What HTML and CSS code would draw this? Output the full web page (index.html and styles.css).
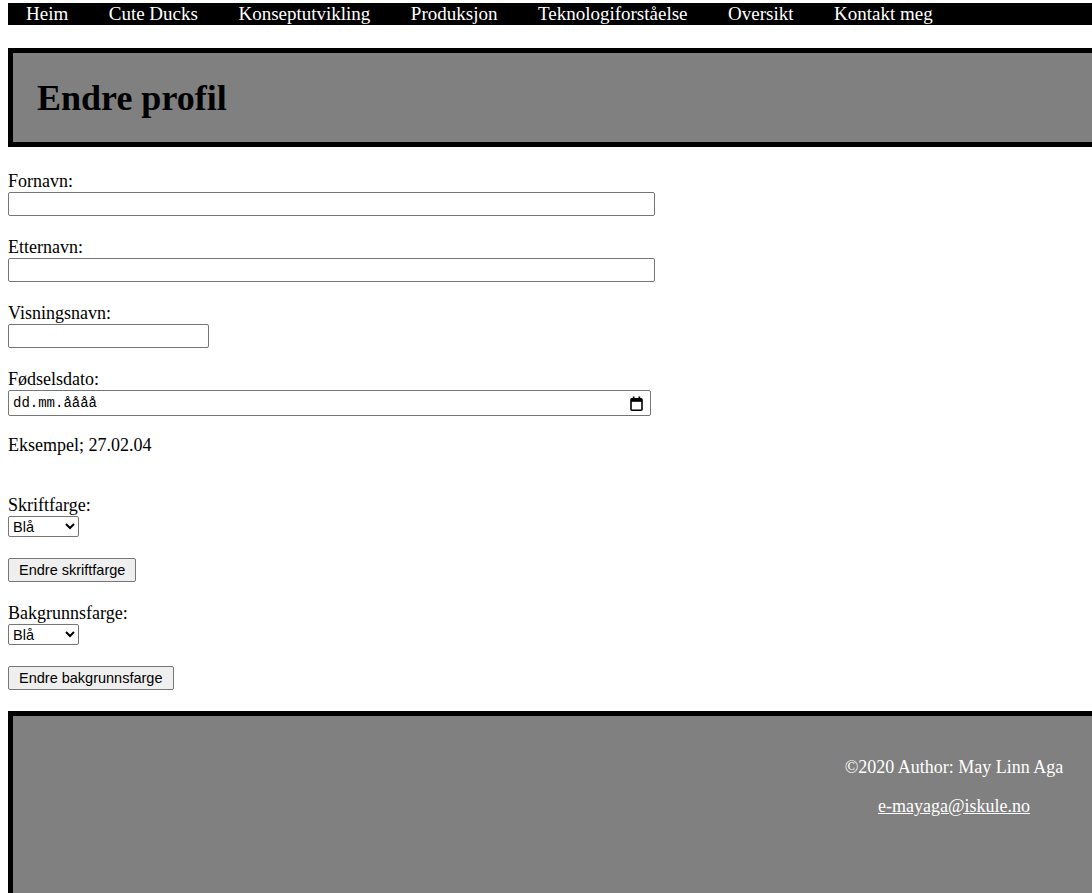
FILE: index.html
```html
<!DOCTYPE html>
<html lang="no">
<head>
    <meta charset="UTF-8">
    <meta name="viewport" content="width=device-width, initial-scale=1.0">
    <title>Endre profil</title>
    <link rel="stylesheet" href="styles.css">
</head>
<body>

    <nav class="topnav">
        <ul>
            <li><a href="#">Heim</a></li>
            <li><a href="#">Cute Ducks</a></li>
            <li><a href="#">Konseptutvikling</a></li>
            <li><a href="#">Produksjon</a></li>
            <li><a href="#">Teknologiforståelse</a></li>
            <li><a href="#">Oversikt</a></li>
            <li><a href="#">Kontakt meg</a></li>
        </ul>
    </nav>

    <header class="banner">
        <h1>Endre profil</h1>
    </header>

    <main class="profile">
        <form id="profileForm">
            <div class="field">
                <label for="fornavn">Fornavn:</label>
                <input type="text" id="fornavn" name="fornavn" class="wide">
            </div>

            <div class="field">
                <label for="etternavn">Etternavn:</label>
                <input type="text" id="etternavn" name="etternavn" class="wide">
            </div>

            <div class="field">
                <label for="visningsnavn">Visningsnavn:</label>
                <input type="text" id="visningsnavn" name="visningsnavn" class="short">
            </div>

            <div class="field date-group">
                <label for="fodselsdato">Fødselsdato:</label>
                <div class="date-field" id="fodselsdato">
                    <span>dd.mm.åååå</span>
                    <svg width="13" height="15" viewBox="0 0 13 15">
                        <rect x="1" y="2.8" width="11" height="11.4" rx="1" fill="none" stroke="#000" stroke-width="1.6"/>
                        <rect x="1" y="2.8" width="11" height="3" fill="#000"/>
                        <rect x="2.8" y="0.5" width="1.7" height="3" fill="#000"/>
                        <rect x="8.5" y="0.5" width="1.7" height="3" fill="#000"/>
                    </svg>
                </div>
            </div>

            <p class="hint">Eksempel; 27.02.04</p>

            <div class="field color-field">
                <label for="skriftfarge">Skriftfarge:</label>
                <select id="skriftfarge" name="skriftfarge">
                    <option value="blue">Blå</option>
                    <option value="red">Rød</option>
                    <option value="green">Grønn</option>
                </select>
            </div>
            <button type="button">Endre skriftfarge</button>

            <div class="field color-field">
                <label for="bakgrunnsfarge">Bakgrunnsfarge:</label>
                <select id="bakgrunnsfarge" name="bakgrunnsfarge">
                    <option value="blue">Blå</option>
                    <option value="red">Rød</option>
                    <option value="green">Grønn</option>
                </select>
            </div>
            <button type="button">Endre bakgrunnsfarge</button>
        </form>
    </main>

    <footer class="site-footer">
        <div class="footer-info">
            <p>©2020 Author: May Linn Aga</p>
            <p><a href="#">e-mayaga@iskule.no</a></p>
        </div>
    </footer>

</body>
</html>
```

FILE: styles.css
```css
/* Basic styling */
html {
    overflow: hidden;
}

body {
    font-family: "Liberation Serif", "Times New Roman", serif;
    font-size: 18px;
    color: #000;
    background-color: #fff;
    margin: 3px 8px 0 8px;
    width: 1100px;
}

/* Navigation */
.topnav ul {
    list-style: none;
    margin: 0;
    padding: 0;
    display: flex;
    gap: 4.5px;
    background-color: #000;
}

.topnav li {
    padding: 0 18px;
}

.topnav a {
    display: block;
    color: #fff;
    text-decoration: none;
    font-size: 19px;
    line-height: 22px;
}

/* Header */
.banner {
    margin-top: 23px;
    border: 5px solid #000;
    background-color: #808080;
    padding: 25px 24px 23px 24px;
}

.banner h1 {
    margin: 0;
    font-size: 36px;
    line-height: 41px;
}

/* Form */
.profile {
    margin-top: 25px;
}

.field {
    margin-bottom: 22px;
}

.field label {
    display: block;
    line-height: 18px;
}

.field input {
    display: block;
    margin: 2px 0 0 0;
    height: 24px;
    padding: 1px 2px;
    border: 1px solid #767676;
    border-radius: 2px;
    box-sizing: border-box;
    font-family: "Liberation Sans", Arial, sans-serif;
    font-size: 14px;
}

.wide {
    width: 647px;
}

.short {
    width: 201px;
}

.date-group {
    margin-bottom: 20px;
}

.date-field {
    display: flex;
    justify-content: space-between;
    align-items: center;
    margin-top: 2px;
    width: 643px;
    height: 26px;
    padding: 0 7px 0 4px;
    border: 1px solid #767676;
    border-radius: 2px;
    box-sizing: border-box;
    font-family: "Liberation Mono", "DejaVu Sans Mono", monospace;
    font-size: 14px;
}

.hint {
    margin: 0;
    line-height: 18px;
}

.color-field {
    margin: 42px 0 21px 0;
}

.color-field + button + .color-field {
    margin-top: 22px;
}

select {
    display: block;
    margin-top: 2px;
    width: 71px;
    height: 21px;
    font-family: "Liberation Sans", Arial, sans-serif;
    font-size: 14.5px;
    border: 1px solid #767676;
    border-radius: 2px;
    background-color: #fff;
    color: #000;
}

button {
    display: block;
    height: 24px;
    padding: 0 10px;
    border: 1px solid #767676;
    border-radius: 2px;
    background-color: #efefef;
    color: #000;
    font-family: "Liberation Sans", Arial, sans-serif;
    font-size: 14.5px;
}

/* Footer */
.site-footer {
    margin-top: 21px;
    border: 5px solid #000;
    background-color: #808080;
    color: #fff;
    display: flex;
    justify-content: flex-end;
    padding: 23px 0 60px 0;
}

.footer-info {
    width: 260px;
    margin-right: 19px;
    text-align: center;
}

.footer-info p {
    margin: 18px 0;
    font-size: 18px;
    line-height: 21px;
}

.footer-info a {
    color: #fff;
}
```
